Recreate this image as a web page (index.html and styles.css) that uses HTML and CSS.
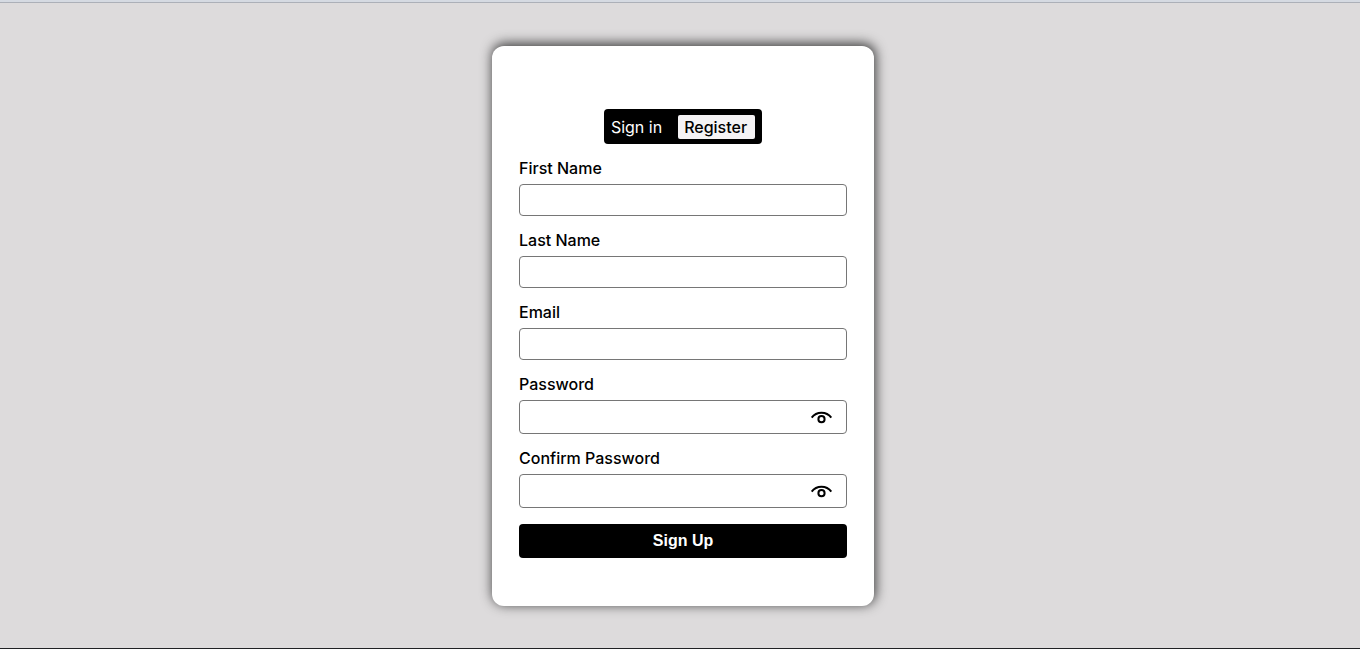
FILE: index.html
```html
<!DOCTYPE html>
<html lang="en">
<head>
<meta charset="utf-8">
<meta name="viewport" content="width=device-width, initial-scale=1">
<title>Register</title>
<link rel="stylesheet" href="styles.css">
</head>
<body>
<main class="page">
  <form class="card">
    <nav class="tabs">
      <a class="tab" href="#signin">Sign in</a>
      <a class="tab tab-active" href="#register">Register</a>
    </nav>
    <div class="field">
      <label for="first">First Name</label>
      <input class="box" id="first" type="text">
    </div>
    <div class="field">
      <label for="last">Last Name</label>
      <input class="box" id="last" type="text">
    </div>
    <div class="field">
      <label for="email">Email</label>
      <input class="box" id="email" type="email">
    </div>
    <div class="field">
      <label for="password">Password</label>
      <div class="secret">
        <input class="secret-input" id="password" type="password">
        <button class="eye" type="button" aria-label="Show password">
          <svg viewBox="0 0 24 24" width="24" height="24" fill="none" stroke="#000" stroke-width="2"><path d="M1.7 12.6C6.5 6 16.5 6 21.3 12.6"/><circle cx="11.5" cy="14.2" r="3.1"/></svg>
        </button>
      </div>
    </div>
    <div class="field">
      <label for="confirm">Confirm Password</label>
      <div class="secret">
        <input class="secret-input" id="confirm" type="password">
        <button class="eye" type="button" aria-label="Show confirmed password">
          <svg viewBox="0 0 24 24" width="24" height="24" fill="none" stroke="#000" stroke-width="2"><path d="M1.7 12.6C6.5 6 16.5 6 21.3 12.6"/><circle cx="11.5" cy="14.2" r="3.1"/></svg>
        </button>
      </div>
    </div>
    <button class="submit" type="submit">Sign Up</button>
  </form>
</main>
</body>
</html>
```
FILE: styles.css
```css
* {
  box-sizing: border-box;
}

body {
  margin: 0;
  border-top: 2px solid #d5dae2;
  font-family: Inter, sans-serif;
  font-size: 16px;
  line-height: 24px;
  color: #000;
  background: #dddbdc;
}

.page {
  display: flex;
  align-items: center;
  justify-content: center;
  min-height: calc(100vh - 2px);
  padding: 16px 16px 16px 22px;
  border-top: 1px solid #acb0b8;
  border-bottom: 1px solid #202124;
}

.card {
  display: flex;
  flex-direction: column;
  gap: 12px;
  width: 100%;
  max-width: 382px;
  padding: 63px 27px 48px;
  border-radius: 12px;
  background: #fff;
  box-shadow: 1px -2px 12px 1px #444;
}

.tabs {
  display: flex;
  align-self: center;
  align-items: center;
  gap: 16px;
  padding: 6px 7px 5px;
  border-radius: 4px;
  background: #000;
}

.tab {
  color: #fff;
  text-decoration: none;
}

.tab-active {
  padding: 0 8px 0 6px;
  border-radius: 2px;
  color: #000;
  background: #f5f3f5;
  font-weight: 500;
}

.field {
  display: flex;
  flex-direction: column;
  gap: 4px;
}

.field label {
  font-weight: 500;
}

.box,
.secret {
  width: 100%;
  height: 32px;
  border: 1px solid #767676;
  border-radius: 4px;
  background: #fff;
}

.box {
  padding: 0 8px;
  font: inherit;
}

.secret {
  display: flex;
  align-items: center;
  height: 34px;
  padding-right: 12px;
}

.secret-input {
  flex: 1;
  min-width: 0;
  height: 100%;
  padding: 0 8px;
  border: 0;
  border-radius: 4px;
  font: inherit;
  background: none;
}

.eye {
  display: flex;
  padding: 0;
  border: 0;
  background: none;
}

.submit {
  height: 34px;
  margin-top: 4px;
  border: 0;
  border-radius: 4px;
  color: #fff;
  background: #000;
  font: bold 16px "Liberation Sans", Arial, sans-serif;
}
```
